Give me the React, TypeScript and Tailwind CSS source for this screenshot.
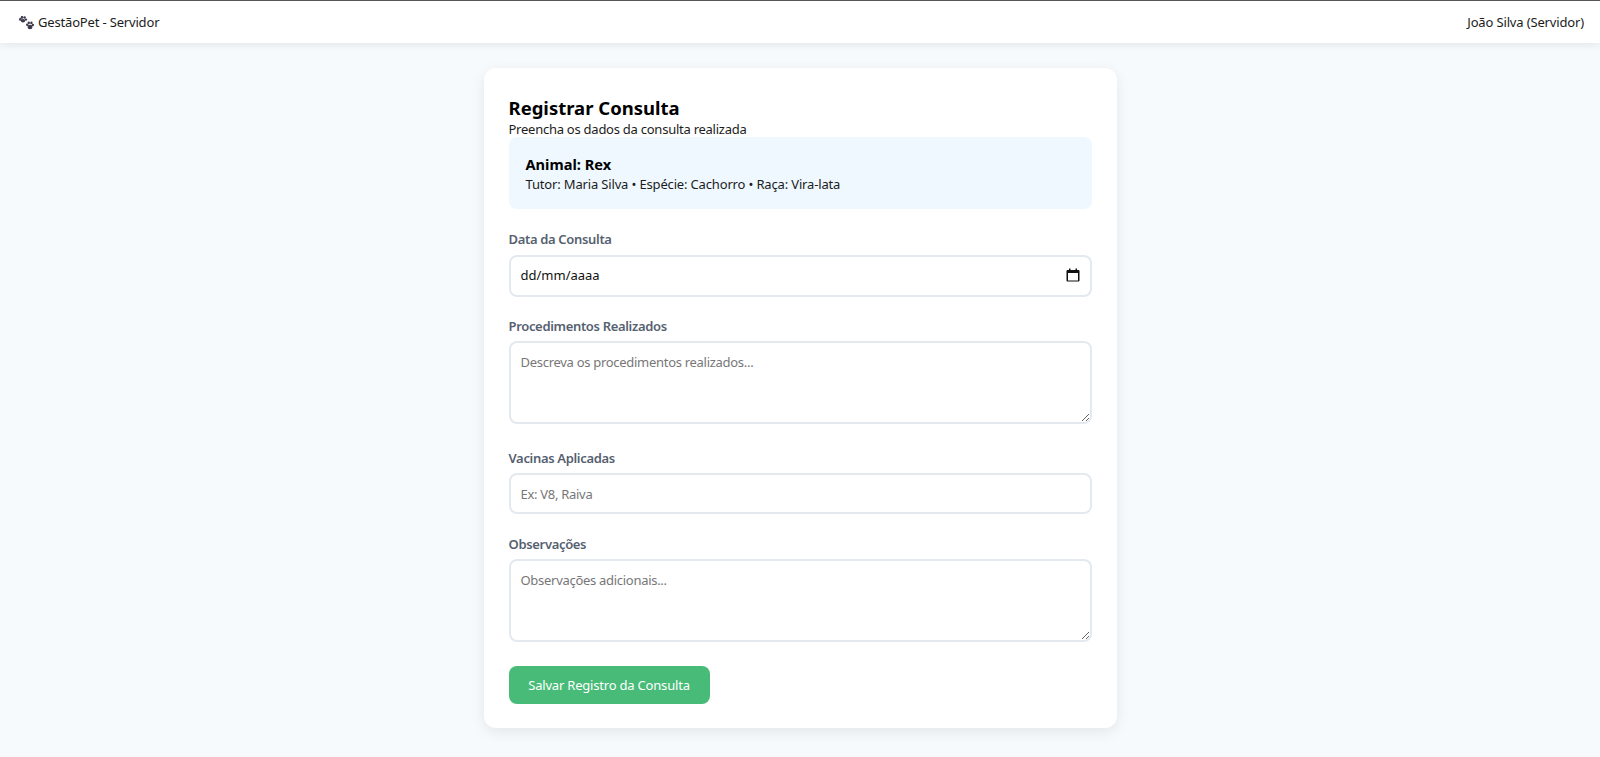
import React from "react";

const font = { fontFamily: '"Noto Sans", "Open Sans", sans-serif' };

function Paw() {
  return (
    <svg width="15" height="14" viewBox="0 0 15 14" className="text-[#3a3a4c]" fill="currentColor">
      <ellipse cx="1.3" cy="3.4" rx="1.3" ry="1.3" />
      <ellipse cx="3" cy="1.4" rx="1.3" ry="1.4" />
      <ellipse cx="5.6" cy="1.5" rx="1.2" ry="1.3" />
      <ellipse cx="7" cy="3.6" rx="1.1" ry="1.2" />
      <ellipse cx="4" cy="4.8" rx="2.2" ry="1.7" />
      <ellipse cx="8.2" cy="8.8" rx="1.2" ry="1.3" />
      <ellipse cx="9.8" cy="6.8" rx="1.2" ry="1.4" />
      <ellipse cx="12.4" cy="6.9" rx="1.2" ry="1.4" />
      <ellipse cx="13.9" cy="9" rx="1.1" ry="1.2" />
      <ellipse cx="11" cy="11" rx="2.5" ry="2.2" />
    </svg>
  );
}

function Calendar() {
  return (
    <svg width="14" height="14" viewBox="0 0 14 14" fill="none" className="text-[#111]">
      <path d="M3 0.5h1.5v1.5h5V0.5H11v1.5h1.5a1 1 0 0 1 1 1v9.5a1 1 0 0 1-1 1h-11a1 1 0 0 1-1-1V3a1 1 0 0 1 1-1H3z" fill="currentColor" />
      <rect x="2" y="5" width="10" height="7.5" fill="#fff" />
    </svg>
  );
}

const fieldCls =
  "block w-full rounded-lg border-2 border-[#e4e9f0] bg-white px-[10px] text-[13px] text-[#111] placeholder:text-[#777] placeholder:tracking-[-0.29px] outline-none";

const labelCls =
  "block text-[13px] font-semibold leading-[19px] tracking-[-0.33px] text-[#565f70]";

export default function App() {
  return (
    <div style={font} className="min-h-[757px] bg-[#f6fafd] text-[#1c1c1c]">
      <header className="flex h-[43px] items-center justify-between border-t border-[#555] bg-white pl-[19px] pr-[18px] pt-[1px] shadow-[0_2px_8px_rgba(0,0,0,0.08)]">
        <div className="flex items-center gap-[4px] text-[13px] tracking-[-0.17px]">
          <Paw />
          <span>GestãoPet - Servidor</span>
        </div>
        <span className="mr-[-2px] text-[13px] tracking-[-0.15px]">João Silva (Servidor)</span>
      </header>

      <main className="flex justify-center pt-[25px]">
        <div className="h-[660px] w-[633px] rounded-xl bg-white p-[25px] shadow-[0_4px_14px_rgba(0,0,0,0.08)]">
          <h1 className="pt-[2px] text-[18.5px] font-bold leading-[26px] text-black">Registrar Consulta</h1>
          <p className="text-[13px] leading-[16px] tracking-[-0.25px] text-[#1c1c1c]">Preencha os dados da consulta realizada</p>

          <section className="flex h-[72px] flex-col justify-center rounded-lg bg-[#eff8ff] px-[17px]">
            <h2 className="text-[14.6px] font-bold leading-[22px] text-black">Animal: Rex</h2>
            <p className="text-[13px] leading-[18px] tracking-[-0.16px]">Tutor: Maria Silva • Espécie: Cachorro • Raça: Vira-lata</p>
          </section>

          <div className="mt-[21px]">
            <label className={`${labelCls} mb-[6px]`}>Data da Consulta</label>
            <div className="relative">
              <input readOnly value="dd/mm/aaaa" className={`${fieldCls} h-[42px] pb-[2px]`} />
              <span className="absolute right-[12px] top-[13px]"><Calendar /></span>
            </div>
          </div>

          <div className="mt-[20px]">
            <label className={`${labelCls} mb-[5px]`}>Procedimentos Realizados</label>
            <textarea placeholder="Descreva os procedimentos realizados..." className={`${fieldCls} h-[83px] py-[10px] leading-[19px]`} />
          </div>

          <div className="mt-[25px]">
            <label className={`${labelCls} mb-[5px]`}>Vacinas Aplicadas</label>
            <input placeholder="Ex: V8, Raiva" className={`${fieldCls} h-[41px]`} />
          </div>

          <div className="mt-[21px]">
            <label className={`${labelCls} mb-[5px]`}>Observações</label>
            <textarea placeholder="Observações adicionais..." className={`${fieldCls} h-[83px] py-[10px] leading-[19px]`} />
          </div>

          <button className="mt-[24px] flex h-[38px] w-[201px] items-center justify-center rounded-lg bg-[#48bb78] pt-[1px] text-[13px] tracking-[-0.2px] text-white">
            Salvar Registro da Consulta
          </button>
        </div>
      </main>
    </div>
  );
}
